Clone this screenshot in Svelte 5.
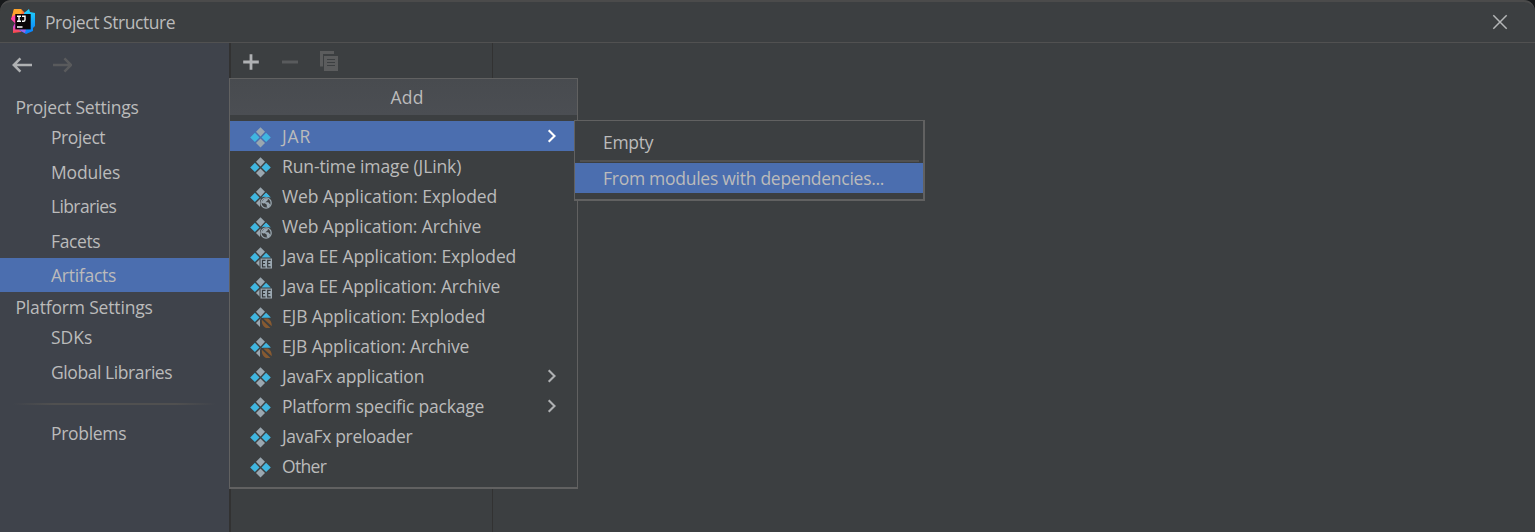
<script>
  const settings = [
    { label: 'Project', w: 54 },
    { label: 'Modules', w: 69 },
    { label: 'Libraries', w: 65 },
    { label: 'Facets', w: 49 },
    { label: 'Artifacts', w: 65, active: true }
  ];
  const platform = [
    { label: 'SDKs', w: 41 },
    { label: 'Global Libraries', w: 121 }
  ];
  const artifacts = [
    { label: 'JAR', w: 29, sub: true, active: true },
    { label: 'Run-time image (JLink)', w: 179 },
    { label: 'Web Application: Exploded', w: 215, badge: 'web' },
    { label: 'Web Application: Archive', w: 199, badge: 'web' },
    { label: 'Java EE Application: Exploded', w: 234, badge: 'ee' },
    { label: 'Java EE Application: Archive', w: 218, badge: 'ee' },
    { label: 'EJB Application: Exploded', w: 203, badge: 'ejb' },
    { label: 'EJB Application: Archive', w: 187, badge: 'ejb' },
    { label: 'JavaFx application', w: 142, sub: true },
    { label: 'Platform specific package', w: 202, sub: true },
    { label: 'JavaFx preloader', w: 130 },
    { label: 'Other', w: 44 }
  ];

  // Spreads the letters of a label so that it spans the given width.
  function fit(node, width) {
    const natural = node.getBoundingClientRect().width;
    node.style.letterSpacing = (width + 0.2 - natural) / node.textContent.length + 'px';
  }
</script>

<div class="window">
  <header class="titlebar">
    <svg class="logo" width="26" height="26" viewBox="0 0 26 26">
      <defs>
        <linearGradient id="warm" x1="0" y1="0" x2="0" y2="1">
          <stop offset="0" stop-color="#ff9419" /><stop offset=".45" stop-color="#ff2a80" /><stop offset=".72" stop-color="#d94adf" /><stop offset="1" stop-color="#ff4a34" />
        </linearGradient>
        <linearGradient id="cool" x1="0" y1="0" x2="0" y2="1">
          <stop offset="0" stop-color="#21d4fb" /><stop offset="1" stop-color="#087cfa" />
        </linearGradient>
      </defs>
      <path d="M4 0H11L15 4 13 18 11 23 3 24 3 18 5 14 1 10Z" fill="url(#warm)" />
      <path d="M4 0H11L12 4 5 9 2 8Z" fill="#ffa52b" />
      <path d="M3 7 7 5 5 14 1 10z" fill="#ff45a8" />
      <path d="M14 4 19 0 20 3 25 4V17L23 19V22L16 25 9 21 14 18Z" fill="url(#cool)" />
      <path d="M10 20h6l-1 4-4-2z" fill="#a060e8" />
      <rect x="5.3" y="5" width="15.4" height="15.4" fill="#0a0507" />
      <path d="M7 7.2h4M9 7.2v5M7 12.2h4M12 7.2h3v3.6q0 1.5-1.5 1.5H12M7 18h5.5" fill="none" stroke="#fff" stroke-width="1.4" />
    </svg>
    <span class="title" use:fit={130}>Project Structure</span>
    <svg class="close" width="16" height="16" viewBox="0 0 16 16"><path d="M1.3 1.3 14.7 14.7M14.7 1.3 1.3 14.7" stroke="#b4b6b7" stroke-width="1.5" /></svg>
  </header>

  <div class="body">
    <aside>
      <nav class="history">
        <svg width="20" height="16" viewBox="0 0 20 16"><path d="M1.8 8H20M8.4 1.4 1.8 8l6.6 6.6" fill="none" stroke="#afb1b3" stroke-width="2.5" /></svg>
        <svg width="20" height="16" viewBox="0 0 20 16"><path d="M1 8h18M12.4 1.4 19 8l-6.6 6.6" fill="none" stroke="#595a5c" stroke-width="2.5" /></svg>
      </nav>
      <h2><span use:fit={123}>Project Settings</span></h2>
      {#each settings as item}
        <div class="nav" class:active={item.active}><span use:fit={item.w}>{item.label}</span></div>
      {/each}
      <h2 class="second"><span use:fit={137}>Platform Settings</span></h2>
      {#each platform as item}
        <div class="nav"><span use:fit={item.w}>{item.label}</span></div>
      {/each}
      <hr />
      <div class="nav"><span use:fit={75}>Problems</span></div>
    </aside>

    <section class="list">
      <div class="toolbar">
        <svg width="16" height="16" viewBox="0 0 16 16"><path d="M8 .2v15.6M.2 8h15.6" stroke="#afb1b3" stroke-width="2.8" /></svg>
        <svg width="16" height="16" viewBox="0 0 16 16"><path d="M0 8h16" stroke="#595b5d" stroke-width="3" /></svg>
        <svg width="20" height="20" viewBox="0 0 20 20"><path d="M1 15.5V0h14v3H4v12.5z" fill="#5b5c5d" /><path d="M5 5h14v15H5z" fill="#5b5c5d" /><path d="M8 8.5h8M8 11.5h8M8 14.5h8" stroke="#3c3f41" stroke-width="1" /></svg>
      </div>
    </section>
    <main></main>
  </div>

  <div class="menu">
    <div class="menu-title"><span use:fit={33}>Add</span></div>
    {#each artifacts as item}
      <div class="row" class:active={item.active}>
        <svg class="icon" width="22" height="22" viewBox="0 0 22 22">
          <path d="M10.5.2 15 4.8 10.5 9.4 6 4.8z" fill="#9aa7b0" />
          <path d="M4.9 5.8 9.5 10.4 4.9 15 .2 10.4zM16.1 5.8 20.8 10.4 16.1 15 11.5 10.4z" fill="#40b6e0" />
          <path d="M10.5 11.4 15 16 10.5 20.6 6 16z" fill="#9aa7b0" />
          {#if item.badge === 'web'}
            <path d="M10 22V14q1-4.5 6-5h6v13z" fill="#3c3f41" />
            <path d="M12.3 9.6 16.1 5.8 20.8 10.4z" fill="#40b6e0" />
            <circle cx="16.1" cy="16" r="5.1" fill="#3c3f41" stroke="#9aa7b0" stroke-width="1.3" />
            <path d="M11.3 15.5 14 12l3.5-.8.5 1.8-2.5 2.2h2.8l2 2.5-1.8 3-1.7-.6v-2.4l-2-1.5-1.6.3z" fill="#9aa7b0" />
          {:else if item.badge === 'ee'}
            <path d="M9.5 10.5H22V22H9.5z" fill="#3c3f41" />
            <path d="M10.5 11.5H22V21.5H10.5z" fill="#9aa7b0" />
            <path d="M15.5 13.4h-3v6.4h3M12.5 16.5h2.5M20.7 13.4h-3v6.4h3M17.7 16.5h2.5" fill="none" stroke="#34383b" stroke-width="1.15" />
          {:else if item.badge === 'ejb'}
            <path d="M10 22V12.5L12.5 10.7H22V22z" fill="#3c3f41" />
            <path d="M13.2 11.5H18q4 2 3.7 7.8zM11.7 12.6 20.5 21H16q-4.3-1.6-4.3-8.4z" fill="#875a31" />
          {/if}
        </svg>
        <span use:fit={item.w}>{item.label}</span>
        {#if item.sub}
          <svg class="chevron" width="10" height="14" viewBox="0 0 10 14"><path d="M1.7 1.2 7.5 7 1.7 12.8" fill="none" stroke={item.active ? '#fff' : '#afb1b3'} stroke-width="2.1" /></svg>
        {/if}
      </div>
    {/each}
  </div>

  <div class="submenu">
    <div class="option first"><span use:fit={50}>Empty</span></div>
    <div class="divider"></div>
    <div class="option active"><span use:fit={281}>From modules with dependencies...</span></div>
  </div>
</div>

<style>
  :global(body) { background: #17191b; }
  * { box-sizing: border-box; }
  .window {
    position: relative;
    display: flex;
    flex-direction: column;
    height: 532px;
    overflow: hidden;
    border-radius: 11px 11px 0 0;
    background: #3c3f41;
    color: #bbbbbb;
    font: 17.5px/24px "Open Sans", "Noto Sans", sans-serif;
  }
  span { white-space: pre; }
  .titlebar {
    display: flex;
    align-items: center;
    flex: none;
    height: 43px;
    padding: 0 27px 0 10px;
    border-top: 2px solid #4b4b4b;
    border-bottom: 1px solid #515151;
    border-radius: 11px 11px 0 0;
  }
  .logo { margin-right: 9px; }
  .close { margin-left: auto; }
  .body { display: flex; flex: 1; }
  aside { width: 229px; background: #3f434b; }
  .history { display: flex; gap: 20px; padding: 14px 0 0 12px; height: 50px; }
  h2 { margin: 0; padding-left: 15.5px; height: 27.5px; font: inherit; line-height: 28px; }
  h2.second { height: 28.5px; line-height: 31px; }
  .nav { height: 34.4px; padding-left: 51px; line-height: 34.4px; }
  h2 + .nav { line-height: 33.6px; }
  hr {
    height: 2px;
    margin: 13px 13px 12px;
    border: 0;
    background: linear-gradient(90deg, transparent, #505050 20%, #505050 80%, transparent);
  }
  hr + .nav { line-height: 33.6px; }
  .active { background: #4b6eaf; }
  .list { width: 264px; border-left: 2px solid #323232; border-right: 1px solid #323232; }
  .toolbar { display: flex; align-items: center; gap: 23px; padding: 10px 0 0 12px; }
  .toolbar svg:last-child { margin: -2px 0 0 -2px; }
  main { flex: 1; }
  .menu {
    position: absolute;
    left: 229px;
    top: 78px;
    width: 349px;
    height: 411px;
    border: 1px solid #616161;
    border-bottom-width: 2px;
    background: #3c3f41;
  }
  .menu-title {
    height: 36px;
    margin-bottom: 6px;
    padding-left: 7px;
    background: linear-gradient(#484b4f, #4b4e53);
    text-align: center;
    line-height: 37px;
  }
  .row { display: flex; align-items: center; height: 30px; padding: 0 20px; }
  .icon { margin: 3px 10px 0 0; }
  .chevron { margin-left: auto; }
  .submenu {
    position: absolute;
    left: 574px;
    top: 120px;
    width: 351px;
    height: 81px;
    padding-top: 7px;
    border: solid #616161;
    border-width: 1px 2px 2px 1px;
    background: #3c3f41;
  }
  .option { height: 30px; padding-left: 28px; line-height: 30px; }
  .option.first { line-height: 28px; }
  .divider { height: 2px; margin: 2px 4px 1px 5px; background: #515151; }
</style>
